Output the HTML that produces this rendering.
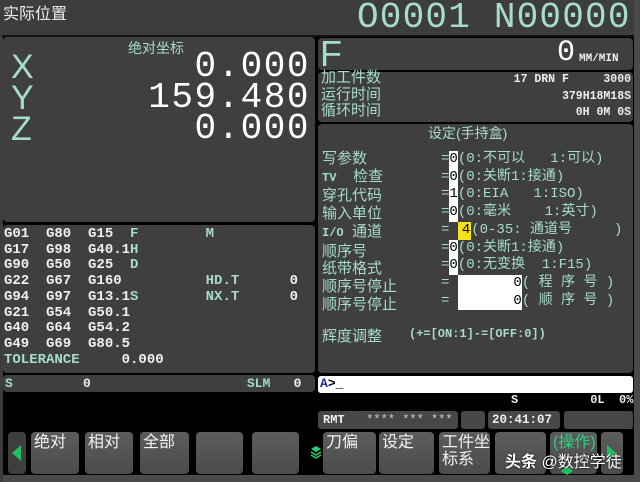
<!DOCTYPE html>
<html><head><meta charset="utf-8"><style>
*{margin:0;padding:0;box-sizing:border-box}
body{width:640px;height:482px;background:#000;position:relative;overflow:hidden;font-family:"Liberation Sans","Noto Sans CJK SC",sans-serif;color:#eee}
.a{position:absolute;white-space:pre}
.p{position:absolute;background:#3f3f3f;border-radius:4px}
.m{font-family:"Liberation Mono","Noto Sans CJK SC",monospace;font-weight:bold}
.c{color:#a6dccb}
.k{position:absolute;top:432px;height:42px;border-radius:4px;background:linear-gradient(#5c5c5c,#4c4c4c);color:#f2f2f2;font-size:16px;line-height:17px;padding:2px 0 0 3px}
.bx{display:inline-block;background:#fff;color:#000;}
</style></head><body>
<div class="a" style="left:0;top:0;width:640px;height:37px;background:#3d3d3d"></div>
<div class="a" style="left:0;top:475px;width:640px;height:7px;background:#4a4a4a"></div>
<div class="a" style="left:634px;top:0;width:6px;height:482px;background:#4a4a4a"></div>
<div class="a" style="left:0;top:0;width:3px;height:482px;background:#3d3d3d"></div>
<div class="a" style="left:2px;top:35px;width:632px;height:2px;background:#111"></div>

<div class="a" style="left:3px;top:0px;font-size:16px;color:#eee">实际位置</div>
<div class="a m c" style="left:357px;top:-3px;font-size:36px;font-weight:normal;letter-spacing:1.2px">O0001 N00000</div>

<div class="p" style="left:3px;top:37px;width:312px;height:185px"></div>
<div class="a c" style="left:128px;top:38px;font-size:14px">绝对坐标</div>
<div class="a c" style="left:11px;top:52px;font-size:34px;line-height:31px">X<br>Y<br>Z</div>
<div class="a m" style="right:330px;top:51px;font-size:36px;letter-spacing:1.5px;line-height:31px;text-align:right;font-weight:normal;color:#fff">0.000<br>159.480<br>0.000</div>

<div class="p" style="left:3px;top:225px;width:312px;height:148px"></div>
<div class="a m" style="left:4px;top:227px;font-size:14px;line-height:15.7px;color:#f0f0f0">G01  G80  G15  <span class="c">F</span>        <span class="c">M</span>
G17  G98  G40.1<span class="c">H</span>
G90  G50  G25  <span class="c">D</span>
G22  G67  G160          <span class="c">HD.T</span>      0
G94  G97  G13.1<span class="c">S</span>        <span class="c">NX.T</span>      0
G21  G54  G50.1
G40  G64  G54.2
G49  G69  G80.5
<span class="c">TOLERANCE</span>     0.000</div>
<div class="p" style="left:3px;top:375px;width:312px;height:17px"></div>
<div class="a m" style="left:5px;top:376px;font-size:13px;color:#f0f0f0"><span class="c">S</span>         0                    <span class="c">SLM</span>   0</div>

<div class="p" style="left:318px;top:38px;width:315px;height:32px"></div>
<div class="a c" style="left:320px;top:33px;font-size:36px">F</div>
<div class="a m" style="left:557px;top:36px;font-size:30px;font-weight:normal;color:#fff">0</div>
<div class="a m" style="left:579px;top:53px;font-size:11px;color:#eee">MM/MIN</div>

<div class="p" style="left:318px;top:72px;width:315px;height:50px"></div>
<div class="a c" style="left:321px;top:70px;font-size:15px;line-height:16.5px">加工件数<br>运行时间<br>循环时间</div>
<div class="a m" style="right:9px;top:72px;font-size:11.5px;line-height:16.5px;text-align:right;color:#eee">17 DRN F     3000<br>379H18M18S<br>0H 0M 0S</div>

<div class="p" style="left:318px;top:124px;width:315px;height:249px"></div>
<div class="a c" style="left:428px;top:123px;font-size:14px">设定(手持盒)</div>
<div class="a c" style="left:322px;top:150px;font-size:15px;line-height:17.7px">写参数
<span class="m" style="font-size:12px">TV</span>    检查
穿孔代码
输入单位
<span class="m" style="font-size:12px">I/O</span>  通道
顺序号
纸带格式
顺序号停止
顺序号停止</div>
<div class="a c" style="left:441px;top:151px;font-size:14px;line-height:17.7px;font-family:'Liberation Mono','Noto Sans CJK SC',monospace">=<span class="bx">0</span>(0:不可以   1:可以)
=<span class="bx">0</span>(0:关断1:接通)
=<span class="bx">1</span>(0:EIA   1:ISO)
=<span class="bx">0</span>(0:毫米    1:英寸)
= <span class="bx" style="background:#f5e21a;padding:0 1px 0 4px">4</span>(0-35: 通道号     )
=<span class="bx">0</span>(0:关断1:接通)
=<span class="bx">0</span>(0:无变换  1:F15)
= <span class="bx" style="width:64px;text-align:right">0</span>( 程 序 号 )
= <span class="bx" style="width:64px;text-align:right">0</span>( 顺 序 号 )</div>
<div class="a c" style="left:322px;top:325px;font-size:15px">辉度调整</div>
<div class="a m c" style="left:409px;top:327px;font-size:12px">(+=[ON:1]-=[OFF:0])</div>

<div class="a" style="left:318px;top:376px;width:315px;height:17px;background:#fff;border-radius:3px"></div>
<div class="a m" style="left:320px;top:376px;font-size:13px;color:#1a2a9a">A<span style="color:#000">&gt;_</span></div>

<div class="a m" style="left:511px;top:393px;font-size:12px;color:#eee">S          0L  0%</div>
<div class="a" style="left:318px;top:411px;width:140px;height:18px;background:#474747;border-radius:3px"></div>
<div class="a m" style="left:323px;top:413px;font-size:12px;color:#eee">RMT <span style="font-weight:normal;color:#ccc">  **** *** ***</span></div>
<div class="a" style="left:461px;top:411px;width:24px;height:18px;background:#474747;border-radius:3px"></div>
<div class="a" style="left:488px;top:411px;width:72px;height:18px;background:#474747;border-radius:3px"></div>
<div class="a m" style="left:492px;top:413px;font-size:12.5px;color:#eee">20:41:07</div>
<div class="a" style="left:564px;top:411px;width:69px;height:18px;background:#474747;border-radius:3px"></div>

<div class="k" style="left:8px;width:18px;background:#3e3e3e"></div>
<svg class="a" style="left:10px;top:444px" width="12" height="18"><polygon points="11,1 11,17 2,9" fill="#20c060"/></svg>
<div class="k" style="left:31px;width:48px">绝对</div>
<div class="k" style="left:85px;width:48px">相对</div>
<div class="k" style="left:140px;width:49px">全部</div>
<div class="k" style="left:196px;width:47px"></div>
<div class="k" style="left:252px;width:47px"></div>
<svg class="a" style="left:310px;top:445px" width="12" height="16"><path d="M6 1 L11 4 L6 7 L1 4Z" fill="#25d070"/><path d="M1 7 L6 10 L11 7 M1 10 L6 13 L11 10" stroke="#25d070" stroke-width="1.5" fill="none"/></svg>
<div class="k" style="left:323px;width:53px">刀偏</div>
<div class="k" style="left:379px;width:55px">设定</div>
<div class="k" style="left:439px;width:51px">工件坐<br>标系</div>
<div class="k" style="left:495px;width:51px"></div>
<div class="k" style="left:550px;width:47px;color:#2dd07a">(操作)</div>
<svg class="a" style="left:560px;top:466px" width="14" height="9"><path d="M7 0 L13 5 L7 9 L1 5Z" fill="#20c060"/></svg>
<div class="k" style="left:601px;width:22px"></div>
<svg class="a" style="left:606px;top:444px" width="12" height="18"><polygon points="1,1 1,17 10,9" fill="#20c060"/></svg>
<div class="a" style="left:505px;top:448px;font-size:16px;font-weight:bold;color:#fff;text-shadow:0 0 2px #000">头条 <span style="font-weight:normal">@数控学徒</span></div>
</body></html>
